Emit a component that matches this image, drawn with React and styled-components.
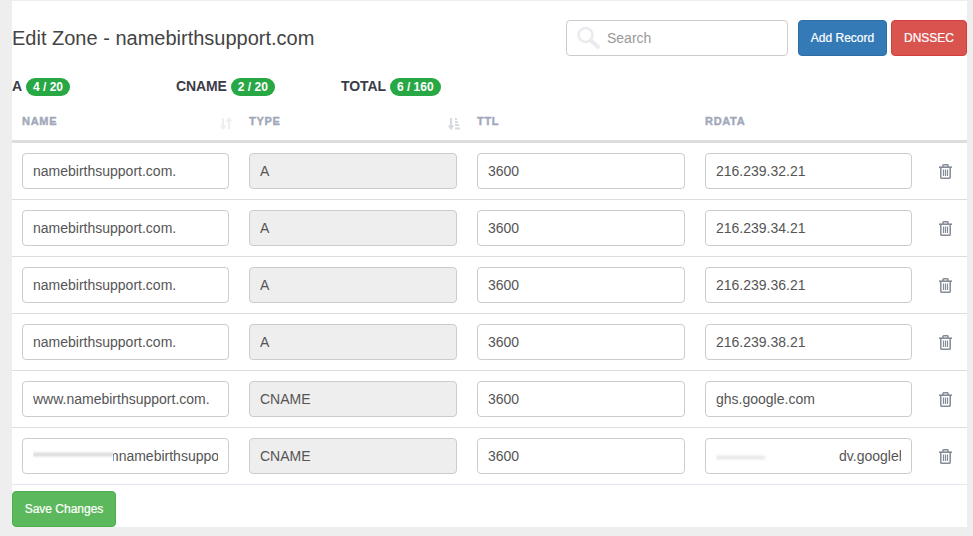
import React from 'react'
import styled, { createGlobalStyle } from 'styled-components'

const GlobalStyle = createGlobalStyle`
    body {
        margin: 0;
        min-height: 100vh;
        padding-top: 1px;
        box-sizing: border-box;
        background: #eeeeee;
        font-family: "Liberation Sans", Arial, sans-serif;
        overflow: hidden;
    }
`

const Panel = styled.div`
    width: 955px;
    height: 526px;
    margin-left: 12px;
    background: #ffffff;
    color: #333333;
`

const TopBar = styled.div`
    display: flex;
    align-items: center;
    height: 36px;
    padding-top: 19px;
`

const Title = styled.h1`
    flex: 1;
    margin: 0;
    font-size: 20px;
    font-weight: 400;
    color: #444444;
`

const SearchBox = styled.div`
    position: relative;
    width: 222px;
    height: 36px;
    margin-right: 10px;
`

const SearchIcon = styled.svg`
    position: absolute;
    left: 10px;
    top: 6px;
    width: 25px;
    height: 24px;
`

const SearchInput = styled.input`
    width: 100%;
    height: 100%;
    box-sizing: border-box;
    padding: 0 12px 0 40px;
    border: 1px solid #cccccc;
    border-radius: 4px;
    font: 14px "Liberation Sans", Arial, sans-serif;
    color: #555555;
    &::placeholder {
        color: #999999;
        opacity: 1;
    }
`

const Button = styled.button`
    height: 36px;
    width: ${props => props.$width}px;
    margin-left: ${props => props.$gap || 0}px;
    padding: 0;
    border: 1px solid ${props => props.$border};
    border-radius: 4px;
    background: ${props => props.$bg};
    color: #ffffff;
    font: 12px "Liberation Sans", Arial, sans-serif;
    -webkit-text-stroke: 0.2px #ffffff;
`

const Summary = styled.div`
    display: flex;
    height: 18px;
    margin-top: 22px;
`

const Stat = styled.div`
    display: flex;
    align-items: flex-start;
    gap: 4px;
    width: ${props => props.$width}px;
    font-size: 14px;
    line-height: 16px;
    font-weight: 700;
    letter-spacing: -0.1px;
    color: #3c3c46;
`

const Badge = styled.span`
    padding: 0 7px;
    height: 18px;
    line-height: 18px;
    border-radius: 9px;
    background: #28a745;
    color: #ffffff;
    font-size: 12px;
    font-weight: 700;
    letter-spacing: 0;
`

const Columns = styled.div`
    display: grid;
    grid-template-columns: 227px 228px 228px 227px 45px;
`

const Head = styled(Columns)`
    height: 44px;
    border-bottom: 3px solid #dddddd;
`

const HeadCell = styled.div`
    position: relative;
    padding: 19px 10px 0;
    font-size: 11px;
    font-weight: 700;
    letter-spacing: 0.7px;
    color: #a1a8ba;
    -webkit-text-stroke: 0.4px #a1a8ba;
`

const SortIcon = styled.svg`
    position: absolute;
    right: 7px;
    top: 21px;
    width: 12px;
    height: 13px;
`

const Row = styled(Columns)`
    height: 56px;
    border-bottom: 1px solid ${props => (props.$last ? '#e1e7f0' : '#dddddd')};
`

const Cell = styled.div`
    position: relative;
    padding: 10px;
`

const Field = styled.input`
    display: block;
    width: 100%;
    height: 36px;
    box-sizing: border-box;
    padding: 0 10px;
    border: 1px solid #cccccc;
    border-radius: 4px;
    background: ${props => (props.disabled ? '#eeeeee' : '#ffffff')};
    color: #555555;
    opacity: 1;
    font: 14px "Liberation Sans", Arial, sans-serif;
    -webkit-text-fill-color: #555555;
`

const Smudge = styled.div`
    position: absolute;
    left: 21px;
    top: 12px;
    width: ${props => props.$width}px;
    height: 32px;
    overflow: hidden;
    background: #ffffff;
    &::after {
        content: '';
        position: absolute;
        left: 0;
        top: ${props => props.$top}px;
        width: ${props => props.$line}%;
        height: 3px;
        background: ${props => props.$tone};
        filter: blur(1.5px);
    }
`

const TrashCell = styled.div`
    display: flex;
    align-items: center;
    justify-content: center;
    padding-left: 2px;
`

const Footer = styled.div`
    padding-top: 6px;
`

const records = [
    { name: 'namebirthsupport.com.', type: 'A', data: '216.239.32.21' },
    { name: 'namebirthsupport.com.', type: 'A', data: '216.239.34.21' },
    { name: 'namebirthsupport.com.', type: 'A', data: '216.239.36.21' },
    { name: 'namebirthsupport.com.', type: 'A', data: '216.239.38.21' },
    { name: 'www.namebirthsupport.com.', type: 'CNAME', data: 'ghs.google.com' },
    {
        name: 'aaaaaaaaa.mnamebirthsupport.com.',
        type: 'CNAME',
        data: 'aaaaaaaaaaaaaaalldv.googlehosted.com',
        hideName: { width: 80, line: 100, top: 13, tone: '#cfcfcf' },
        hideData: { width: 123, line: 40, top: 16, tone: '#e0e0e0' },
    },
]

const Trash = () => (
    <svg width="13" height="15" viewBox="0 0 13 15" fill="none" stroke="#858b97" strokeWidth="1.5">
        <path d="M0 3.2h13" strokeWidth="1.6" />
        <path d="M4 3V1.500q0-.7.7-.7h3.600q.7 0 .7.7V3" />
        <path d="M1.800 3.200v10q0 1.100 1.100 1.100h7.200q1.100 0 1.100-1.100v-10" />
        <path d="M4.500 5.500v6.500M6.500 5.500v6.500M8.500 5.500v6.500" strokeWidth="1.200" />
    </svg>
)

const App = () => (
    <Panel>
        <GlobalStyle />
        <TopBar>
            <Title>Edit Zone - namebirthsupport.com</Title>
            <SearchBox>
                <SearchIcon viewBox="0 0 25 24" fill="none" stroke="#e9ebee">
                    <circle cx="9.5" cy="9" r="7" strokeWidth="2.6" />
                    <path d="M15 14.500l7 6.500" strokeWidth="4" strokeLinecap="round" />
                </SearchIcon>
                <SearchInput placeholder="Search" />
            </SearchBox>
            <Button $width={89} $bg="#337ab7" $border="#2e6da4">Add Record</Button>
            <Button $width={76} $gap={4} $bg="#d9534f" $border="#d43f3a">DNSSEC</Button>
        </TopBar>

        <Summary>
            <Stat $width={164}>A <Badge>4 / 20</Badge></Stat>
            <Stat $width={165}>CNAME <Badge>2 / 20</Badge></Stat>
            <Stat>TOTAL <Badge>6 / 160</Badge></Stat>
        </Summary>

        <Head>
            <HeadCell>
                NAME
                <SortIcon viewBox="0 0 12 13" fill="none" stroke="#eceef1" strokeWidth="2">
                    <path d="M3 1v10M.8 8.500L3 11.500l2.200-3M9 12V2M6.800 4.500L9 1.500l2.200 3" />
                </SortIcon>
            </HeadCell>
            <HeadCell>
                TYPE
                <SortIcon viewBox="0 0 12 13" fill="none" stroke="#d5d9e2" strokeWidth="2">
                    <path d="M3 1v10M.8 8.500L3 11.500l2.200-3M7 2h2M7 5h3M7 8h4M7 11.500h5" />
                </SortIcon>
            </HeadCell>
            <HeadCell>TTL</HeadCell>
            <HeadCell>RDATA</HeadCell>
            <div />
        </Head>

        {records.map((record, i) => (
            <Row key={i} $last={i === records.length - 1}>
                <Cell>
                    <Field readOnly value={record.name} />
                    {record.hideName && (
                        <Smudge
                            $width={record.hideName.width}
                            $line={record.hideName.line}
                            $top={record.hideName.top}
                            $tone={record.hideName.tone}
                        />
                    )}
                </Cell>
                <Cell>
                    <Field disabled value={record.type} />
                </Cell>
                <Cell>
                    <Field readOnly value="3600" />
                </Cell>
                <Cell>
                    <Field readOnly value={record.data} />
                    {record.hideData && (
                        <Smudge
                            $width={record.hideData.width}
                            $line={record.hideData.line}
                            $top={record.hideData.top}
                            $tone={record.hideData.tone}
                        />
                    )}
                </Cell>
                <TrashCell>
                    <Trash />
                </TrashCell>
            </Row>
        ))}

        <Footer>
            <Button $width={104} $bg="#5cb85c" $border="#4cae4c">Save Changes</Button>
        </Footer>
    </Panel>
)

export default App
